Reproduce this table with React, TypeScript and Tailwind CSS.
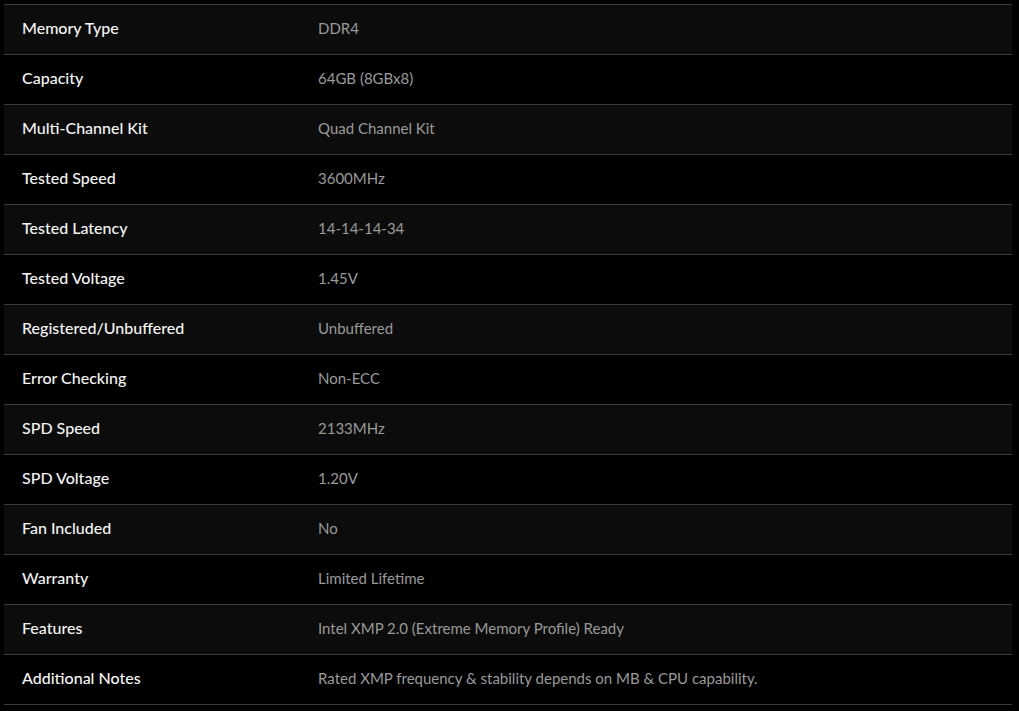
import React from 'react';

interface Spec {
  label: string;
  value: string;
}

const specs: Spec[] = [
  { label: 'Memory Type', value: 'DDR4' },
  { label: 'Capacity', value: '64GB (8GBx8)' },
  { label: 'Multi-Channel Kit', value: 'Quad Channel Kit' },
  { label: 'Tested Speed', value: '3600MHz' },
  { label: 'Tested Latency', value: '14-14-14-34' },
  { label: 'Tested Voltage', value: '1.45V' },
  { label: 'Registered/Unbuffered', value: 'Unbuffered' },
  { label: 'Error Checking', value: 'Non-ECC' },
  { label: 'SPD Speed', value: '2133MHz' },
  { label: 'SPD Voltage', value: '1.20V' },
  { label: 'Fan Included', value: 'No' },
  { label: 'Warranty', value: 'Limited Lifetime' },
  { label: 'Features', value: 'Intel XMP 2.0 (Extreme Memory Profile) Ready' },
  { label: 'Additional Notes', value: 'Rated XMP frequency & stability depends on MB & CPU capability.' },
];

const App: React.FC = () => {
  return (
    <div className="min-h-[711px] bg-black pt-1 pl-1 pr-[7px] font-['Lato',sans-serif]">
      <div className="border-t border-[#3c3c3c]">
        {specs.map((spec, i) => (
          <div
            key={spec.label}
            className={`flex h-[50px] items-center border-b border-[#3c3c3c] pb-[3px] ${i % 2 === 0 ? 'bg-[#0c0c0c]' : 'bg-black'}`}
          >
            {/* label column */}
            <div className="w-[296px] shrink-0 pl-[18px] text-[16px] font-medium text-[#f4f4f4]">{spec.label}</div>
            <div className="pl-[18px] text-[15px] text-[#9a9a9a]">{spec.value}</div>
          </div>
        ))}
      </div>
    </div>
  );
};

export default App;
